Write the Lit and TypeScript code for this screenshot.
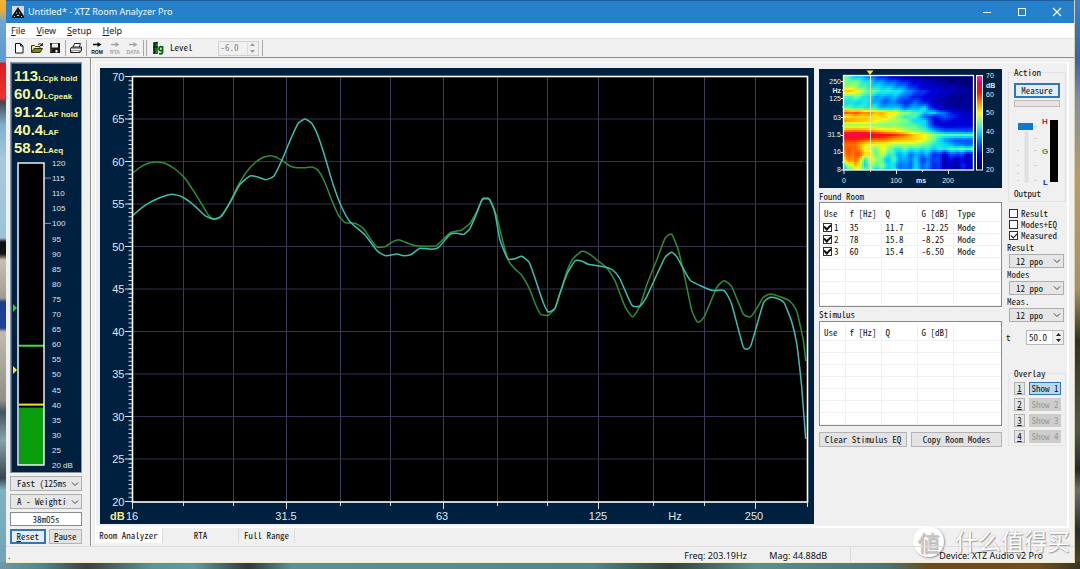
import { LitElement, html, svg, css } from "lit";
import { customElement, property } from "lit/decorators.js";

type Pt = [number, number];

/* Smooth path through a list of points. */
function smooth(p: Pt[]): string {
  let d = `M${p[0][0].toFixed(1)} ${p[0][1].toFixed(1)}`;
  for (let i = 0; i < p.length - 1; i++) {
    const a = p[Math.max(0, i - 1)], b = p[i], c = p[i + 1], e = p[Math.min(p.length - 1, i + 2)];
    const k = 12;
    d += `C${[b[0] + (c[0] - a[0]) / k, b[1] + (c[1] - a[1]) / k, c[0] - (e[0] - b[0]) / k, c[1] - (e[1] - b[1]) / k, c[0], c[1]].map((v) => v.toFixed(1)).join(" ")}`;
  }
  return d;
}

/* A run of samples: start offset, then x/y pairs in thirds of a unit. */
function run(ox: number, oy: number, v: number[]): Pt[] {
  const out: Pt[] = [];
  for (let i = 0; i < v.length; i += 2) out.push([ox + v[i] / 3, oy + v[i + 1] / 3]);
  return out;
}

const GREEN = smooth([
  ...run(25, 2, [22, 310, 45, 292, 70, 280, 95, 276, 120, 280, 150, 297, 180, 325, 205, 362, 230, 402, 250, 435, 265, 446, 285, 440, 310, 405, 340, 345, 365, 305, 390, 278, 415, 262, 437, 257, 455, 262, 475, 274, 495, 288, 515, 293, 540, 293, 562, 291, 580, 302, 600, 338, 620, 390, 640, 435]),
  ...run(240, 112, [15, 128, 45, 130, 70, 145, 95, 182, 112, 201, 135, 200, 155, 187, 175, 179, 195, 186, 220, 196, 265, 199, 290, 196, 330, 159, 365, 150, 390, 130, 410, 95, 427, 60, 450, 60, 470, 110, 485, 170, 505, 240, 525, 267, 545, 285, 570, 330, 585, 370, 602, 403, 625, 406, 645, 385]),
  ...run(460, 142, [0, 250, 20, 185, 40, 145, 65, 124, 85, 130, 115, 153, 140, 173, 165, 212, 195, 290, 218, 320, 240, 288, 260, 225, 290, 150, 315, 85, 335, 73, 355, 120, 375, 205, 395, 300, 413, 337, 433, 320, 470, 233, 492, 212, 515, 230, 550, 312, 572, 320, 592, 292, 610, 262, 632, 252, 665, 262, 690, 274, 710, 303, 730, 390, 737, 453]),
]);

const CYAN = smooth([
  ...run(25, 2, [22, 437, 60, 406, 100, 385, 140, 373, 170, 380, 205, 404, 240, 437, 268, 448, 290, 438, 315, 398, 345, 343, 375, 318, 395, 320, 422, 329, 447, 318, 470, 272, 500, 200, 520, 160, 540, 147, 560, 160, 580, 200, 600, 262, 625, 345, 650, 412]),
  ...run(240, 112, [30, 125, 75, 165, 112, 213, 137, 227, 170, 222, 190, 227, 212, 224, 240, 205, 275, 208, 295, 203, 330, 163, 350, 160, 372, 163, 390, 145, 410, 100, 427, 57, 448, 57, 465, 100, 480, 180, 503, 236, 525, 236, 545, 229, 568, 248, 590, 310, 610, 368, 625, 396, 645, 385]),
  ...run(460, 142, [0, 250, 22, 190, 45, 153, 65, 153, 85, 163, 130, 170, 158, 180, 180, 207, 215, 285, 240, 288, 260, 260, 290, 195, 315, 142, 335, 127, 350, 140, 375, 185, 393, 213, 455, 241, 492, 241, 515, 283, 550, 411, 572, 408, 610, 280, 632, 262, 650, 265, 672, 278, 695, 335, 710, 400, 725, 530, 737, 687]),
]);

/* Decay levels in dB: first number is the row position, the rest run along time. */
const DECAY: number[][] = [
  [0, 45, 40, 38, 34, 30, 27, 24, 22, 21, 21, 20, 21, 21, 20],
  [15, 45, 45, 42, 38, 36, 34, 31, 28, 26, 24, 22, 21, 21, 21],
  [33, 48, 47, 43, 41, 40, 38, 36, 30, 27, 26, 25, 24, 22, 22],
  [43, 53, 52, 46, 44, 42, 42, 39, 34, 31, 28, 27, 25, 24, 24],
  [60, 43, 45, 42, 38, 37, 38, 34, 30, 28, 26, 25, 22, 22, 22],
  [76, 41, 40, 41, 38, 34, 36, 30, 34, 30, 26, 24, 22, 23, 24],
  [94, 44, 43, 42, 42, 38, 40, 36, 38, 40, 28, 24, 23, 23, 23],
  [107, 58, 58, 56, 54, 52, 50, 46, 44, 40, 40, 34, 28, 26, 25],
  [119, 50, 52, 52, 51, 52, 48, 42, 44, 34, 30, 34, 30, 27, 26],
  [130, 56, 54, 53, 51, 49, 47, 46, 40, 40, 27, 30, 28, 27, 27],
  [146, 46, 46, 47, 46, 45, 46, 44, 44, 40, 30, 27, 27, 28, 28],
  [162, 56, 57, 56, 54, 52, 51, 48, 46, 44, 38, 34, 34, 33, 33],
  [174, 66, 67, 66, 65, 62, 60, 57, 52, 50, 46, 44, 44, 44, 44],
  [188, 60, 60, 59, 57, 57, 54, 53, 52, 50, 44, 37, 34, 34, 34],
  [202, 57, 57, 51, 50, 49, 48, 48, 48, 46, 42, 40, 36, 34, 34],
  [216, 57, 58, 50, 46, 50, 42, 44, 42, 42, 40, 42, 44, 44, 44],
  [232, 55, 59, 54, 46, 47, 40, 38, 36, 38, 32, 28, 34, 30, 28],
  [248, 52, 58, 44, 50, 40, 42, 36, 38, 33, 34, 26, 28, 26, 30],
  [266, 42, 54, 42, 46, 44, 38, 34, 38, 36, 32, 27, 24, 30, 26],
  [284, 37, 46, 48, 40, 40, 42, 34, 40, 34, 30, 27, 24, 28, 25],
];

const STOPS: [number, number[]][] = [
  [20, [0, 0, 110]], [28, [0, 0, 220]], [34, [0, 90, 255]], [40, [0, 220, 255]], [45, [110, 255, 140]],
  [50, [250, 250, 20]], [55, [255, 150, 0]], [61, [255, 20, 0]], [66, [240, 0, 90]], [70, [255, 40, 230]],
];

function tint(v: number): string {
  for (let i = 1; i < STOPS.length; i++) {
    if (v <= STOPS[i][0]) {
      const [a, ca] = STOPS[i - 1], [b, cb] = STOPS[i];
      const k = Math.max(0, (v - a) / (b - a));
      return `rgb(${ca.map((c, j) => Math.round(c + (cb[j] - c) * k)).join(",")})`;
    }
  }
  return "rgb(255,40,230)";
}

function level(x: number, y: number): number {
  const fy = y * 3;
  let r = 1;
  while (r < DECAY.length - 1 && DECAY[r][0] < fy) r++;
  const a = DECAY[r - 1], b = DECAY[r];
  const ky = Math.min(1, (fy - a[0]) / (b[0] - a[0]));
  const cx = Math.min(12.99, x / 10), c = Math.floor(cx), kx = cx - c;
  const at = (row: number[]) => row[c + 1] * (1 - kx) + row[c + 2] * kx;
  const streak = y > 66 ? 1.8 * Math.sin(x * 0.55) * Math.min(1, (y - 66) / 12) : 0;
  const ripple = y < 40 ? 0.7 * Math.sin(x * 0.5 + y * 0.4) : 0;
  return at(a) * (1 - ky) + at(b) * ky + streak + ripple;
}

const chevron = html`<svg class="chev" viewBox="0 0 8 8" aria-hidden="true"><path d="M1 2.5 4 5.5 7 2.5" fill="none" stroke="#444" /></svg>`;

@customElement("level-meter")
class LevelMeter extends LitElement {
  @property({ type: Number }) value = 39;
  static styles = css`
    :host { display: block; }
    svg { display: block; width: 100%; height: auto; }
    text { font: 8px "Liberation Sans", sans-serif; fill: #dce6ee; }
  `;
  render() {
    const y = (v: number) => 6 + (120 - v) * 3.02;
    const marks = Array.from({ length: 21 }, (_, i) => 120 - i * 5);
    return html`<svg viewBox="0 0 70 314" role="img" aria-label="Sound level meter">
      <rect x="8" y="6" width="25" height="302" fill="#000" />
      <rect x="8" y=${y(this.value)} width="25" height=${308 - y(this.value)} fill="#0a9d0e" />
      <path d="M8 ${y(59.5)}h25" stroke="#3fe23a" stroke-width="2" />
      <path d="M8 ${y(40)}h25" stroke="#f2e53a" stroke-width="2" />
      <rect x="7" y="6" width="26" height="302" fill="none" stroke="#fff" stroke-width="1.4" />
      <path d="M2 147l4 4-4 4z" fill="#22d822" /><path d="M2 209l4 4-4 4z" fill="#f5ee2a" />
      <path d="M34 ${y(115)}h6M34 ${y(100)}h6" stroke="#8a93b8" />
      ${marks.map((m) => svg`<text x="41" y=${y(m) + 3}>${m === 20 ? "20 dB" : m}</text>`)}
    </svg>`;
  }
}

@customElement("response-chart")
class ResponseChart extends LitElement {
  static styles = css`
    :host { display: block; background: #00203f; }
    svg { display: block; width: 100%; height: auto; }
    text { font: 11px "Liberation Sans", sans-serif; fill: #dfe7ee; }
    .unit { font-weight: bold; fill: #f4f08c; }
    .end { text-anchor: end; }
    .mid { text-anchor: middle; }
  `;
  render() {
    const cols = [83.5, 133.5, 186.5, 240.5, 290.5, 343.5, 397.5, 447.5, 498.5, 553.5, 604.5, 655.5];
    const rows = Array.from({ length: 11 }, (_, i) => i);
    const minor = Array.from({ length: 101 }, (_, i) => `M28.5 ${(8.5 + i * 4.25).toFixed(2)}h4`).join("");
    const names: [number, string][] = [[186, "31.5"], [342, "63"], [498, "125"], [575, "Hz"], [654, "250"]];
    return html`<svg viewBox="0 0 714 456" role="img" aria-label="Room response, dB over Hz">
      <rect x="32" y="8" width="676" height="426" fill="#000" />
      ${cols.map((x, i) => svg`<path d="M${x} 9V433" stroke="#3d3b5c" /><path d="M${x} 434v${i % 3 === 2 ? 7 : 4}" stroke="#d8dde4" />`)}
      ${rows.slice(1, 10).map((i) => svg`<path d="M33 ${8.5 + i * 42.5}H707" stroke="#34324f" />`)}
      <path d=${minor} stroke="#c9d3dc" />
      ${rows.map((i) => svg`<path d="M25 ${8.5 + i * 42.5}h8" stroke="#dfe7ee" /><text class="end" x="24.5" y=${12.5 + i * 42.5}>${70 - i * 5}</text>`)}
      <path d="M32.5 434v7M707.5 434v5" stroke="#d8dde4" />
      <path d=${GREEN} fill="none" stroke="#2d8f33" stroke-width="1.5" />
      <path d=${CYAN} fill="none" stroke="#3dbfb0" stroke-width="1.5" />
      <rect x="32.5" y="8.5" width="675" height="425.5" fill="none" stroke="#fff" stroke-width="1.6" />
      <text class="unit" x="10" y="452">dB</text><text x="26" y="452">16</text>
      ${names.map(([x, t]) => svg`<text class="mid" x=${x} y="452">${t}</text>`)}
    </svg>`;
  }
}

@customElement("decay-map")
class DecayMap extends LitElement {
  static styles = css`
    :host { display: block; background: #00203f; }
    svg { display: block; width: 100%; height: auto; }
    text { font: 7px "Liberation Sans", sans-serif; fill: #e6ecf2; }
    .b { font-weight: bold; }
    .end { text-anchor: end; }
    .mid { text-anchor: middle; }
  `;
  render() {
    const cells = [];
    for (let y = 0; y < 94; y += 2) for (let x = 0; x < 130; x += 2) cells.push(svg`<rect x=${25 + x} y=${7 + y} width="2" height="2" fill=${tint(level(x, y))} />`);
    const left: [number, string][] = [[15, "250"], [32, "125"], [51, "63"], [68, "31.5"], [85, "16"], [103, "8"]];
    const right: [number, string][] = [[9, "70"], [28, "60"], [46, "50"], [65, "40"], [84, "30"], [103, "20"]];
    return html`<svg viewBox="0 0 183 119" role="img" aria-label="Decay over time">
      <defs><linearGradient id="scale" x1="0" y1="0" x2="0" y2="1">
        ${[...STOPS].reverse().map(([v, c]) => svg`<stop offset=${(70 - v) / 50} stop-color="rgb(${c.join(",")})" />`)}
      </linearGradient></defs>
      <g shape-rendering="crispEdges">${cells}</g>
      <path d="M51.5 6v95" stroke="#f3f3a8" />
      <path d="M47.500 1.500h7l-3.500 4.500z" fill="#f6ea20" />
      <rect x="24.500" y="6.500" width="130" height="94.500" fill="none" stroke="#fff" stroke-width="1.300" />
      <rect x="157.500" y="6.500" width="6" height="94.500" fill="url(#scale)" stroke="#fff" />
      <path d="M22 12.500h3M22 29.500h3M22 48.500h3M22 66.500h3M22 83.500h3M22 101h3M23 21h2M23 38h2M23 57h2M23 75h2M23 93h2M25 101v4M77.500 101v4M129.500 101v4M51.500 101v2M103.500 101v2" stroke="#dfe6ee" />
      ${left.map(([y, t]) => svg`<text class="end" x="22" y=${y}>${t}</text>`)}
      <text class="end b" x="22" y="24">Hz</text>
      ${right.map(([y, t]) => svg`<text x="167" y=${y}>${t}</text>`)}
      <text class="b" x="167" y="19">dB</text>
      <text class="mid" x="25" y="114">0</text><text class="mid" x="77" y="114">100</text>
      <text class="mid b" x="102" y="114">ms</text><text class="mid" x="129" y="114">200</text>
    </svg>`;
  }
}

@customElement("app-root")
class AppRoot extends LitElement {
  static styles = css`
    :host {
      display: block;
      min-height: 100vh;
      --ui: "Noto Sans", "Open Sans", sans-serif;
      --fixed: "Noto Sans CJK SC", monospace;
      font: 9px/12px var(--fixed);
      font-feature-settings: "hwid";
      color: #111;
    }
    * { box-sizing: border-box; }
    button, input, select { font: inherit; color: inherit; margin: 0; padding: 0; border-radius: 0; }
    u { text-underline-offset: 1px; }
    .desktop {
      position: relative;
      display: flex;
      min-height: 100vh;
      padding: 0 5px 6px 6px;
      background:
        linear-gradient(90deg, #6f97a4, #4d8490 4%, #3e3f40 8%, #57949b 14%, #5e9aa8 18%, #2f393a 23%, #5b9199 27%, #4f8690 55%, #33423f 62%, #5b8e95 70%, #49747c 82%, #6b4a1e 86%, #70501f 96%, #3a3424) bottom / 100% 7px no-repeat,
        linear-gradient(180deg, #f2b233 0, #f0a92c 10px, #6ea6d4 22px, #5f9bcf 62px, #d81e1e 63px, #e33 98px, #3f4850 102px, #7fb0cf 125px, #a6c8dc 160px, #9cc4d8 238px, #101010 242px, #111 254px, #c9c0b0 260px, #a39c90 298px, #1b3d8c 302px, #1f429a 328px, #c4bbad 332px, #8f9088 400px, #47535a 412px, #83a5ae 440px, #3b464c 478px, #7fb2c0 490px, #6fa4b4 100%) left / 6px 100% no-repeat,
        linear-gradient(180deg, #3c7fc4 0, #3566a8 60px, #7e8ea6 100px, #b89a6c 180px, #a48f6e 290px, #2e3325 340px, #4a5a4a 430px, #222a2a 470px, #6a6f66 490px, #24302e 530px, #5c4520 100%);
    }
    .window { flex: 1; min-width: 0; display: flex; flex-direction: column; background: #f0f0f0; border-bottom: 1px solid #f3ecc4; border-right: 1px solid #d9cfa6; }
    .title { display: flex; align-items: center; height: 23px; background: #2681cd; border-top: 1px solid #1c5f9c; color: #f4f9ff; font: 9px/14px var(--ui); padding-left: 6px; gap: 4px; }
    .title h1 { font: inherit; margin: 0; flex: 1; }
    .title svg, .tools svg { display: block; flex: none; }
    .title button { width: 35px; height: 22px; border: 0; background: none; display: grid; place-items: center; }
    .title .app { width: 12px; height: 12px; }
    .caps { display: flex; }
    .menu { display: flex; gap: 11px; height: 15px; padding-left: 5px; background: #fff; font: 9px/15px var(--ui); }
    .menu a { color: #222; text-decoration: none; }
    .tools { display: flex; align-items: center; height: 20px; padding-left: 4px; border-top: 1px solid #e2e2e2; border-bottom: 1px solid #8c8c8c; background: #f1f1f1; }
    .tools button { border: 0; background: none; width: 18px; height: 18px; display: grid; place-items: center; }
    .tools .fg { margin-left: 4px; }
    .sep { width: 1px; height: 16px; margin: 0 1px; background: #a8a8a8; }
    .tools label { margin-left: 5px; margin-right: 25px; }
    .tools .off + .sep { margin-left: 3px; }
    .tiny { font: bold 5px "Liberation Sans", sans-serif; text-anchor: middle; }
    .spin { display: flex; height: 15px; border: 1px solid #b8b8b8; background: #fff; }
    .spin input { width: 26px; min-width: 0; flex: 1; border: 0; background: none; padding-left: 2px; }
    .spin .arrows { display: grid; width: 11px; background: #f0f0f0; border-left: 1px solid #ddd; }
    .spin .arrows button { width: 10px; height: 6px; border: 0; background: none; display: grid; place-items: center; }
    .spin.off { width: 41px; background: #f0f0f0; border-color: #d0d0d0; color: #888; }
    .main { flex: 1; display: flex; min-height: 0; }
    .side { flex: none; width: 85px; padding: 4px 8px 2px 4px; display: flex; flex-direction: column; gap: 3px; border-right: 1px solid #8d8d8d; }
    .frame { background: #00203f; border: 1px solid #8a93a0; box-shadow: inset 1px 1px #555e6c; height: 411px; }
    .reads { margin: 0; padding: 4px 0 0 3px; }
    .reads div { display: flex; align-items: baseline; height: 18px; color: #f6f79a; white-space: nowrap; font: bold 15px/18px "Liberation Sans", sans-serif; font-feature-settings: normal; }
    .reads dd { margin: 0; order: 0; }
    .reads dt { order: 1; font-size: 8px; }
    .pick { position: relative; display: flex; height: 15px; border: 1px solid #adadad; background: #e6e6e6; }
    .pick select { flex: 1; min-width: 0; width: 100%; appearance: none; border: 0; background: none; padding-left: 6px; padding-right: 14px; }
    .chev { position: absolute; right: 2px; top: 3px; width: 8px; height: 8px; pointer-events: none; }
    .time { width: 100%; height: 14px; border: 1px solid #8a8a8a; background: #fff; text-align: center; }
    .pair { display: flex; gap: 3px; }
    .btn { border: 1px solid #b3b3b3; background: #e3e3e3; height: 15px; line-height: 11px; white-space: nowrap; }
    .pair .btn { flex: 1; }
    .btn.focus { border: 2px solid #2f78b4; background: #e6eef5; line-height: 10px; }
    .content { flex: 1; min-width: 0; display: flex; flex-direction: column; padding: 4px 5px 0 3px; border-left: 1px solid #fff; }
    .page { display: flex; padding: 5px 0 2px 4px; background: #f0f0f0; border: solid #fff; border-width: 1px 2px 2px 1px; }
    .page response-chart { flex: 1; min-width: 0; }
    .mid { flex: none; width: 183px; margin-left: 5px; padding-top: 1px; }
    .mid h2, .act h2 { font: inherit; margin: 0; height: 14px; line-height: 17px; }
    .list { height: 105px; border: 1px solid #8a8a8a; background: #fff; padding: 3px 0 0; overflow: hidden; }
    .mid .list + h2 { height: 14px; line-height: 15px; }
    table { width: 100%; border-collapse: collapse; table-layout: fixed; }
    th, td { height: 12px; padding: 0 0 0 4px; font-weight: normal; text-align: left; line-height: 11px; border: solid #f0f0f0; border-width: 0 1px 1px 0; white-space: nowrap; }
    thead th { height: 15px; }
    tr > :last-child { border-right: 0; }
    .use { display: flex; align-items: center; gap: 2px; }
    .c1 { width: 25px; } .c2, .c3, .c4 { width: 36px; }
    input[type="checkbox"] { appearance: none; flex: none; width: 9px; height: 9px; border: 1px solid #333; background: #fff; display: grid; place-items: center; }
    input[type="checkbox"]:checked::after { content: ""; width: 5px; height: 3px; border: solid #111; border-width: 0 0 1px 1px; rotate: -45deg; translate: 0 -1px; }
    .use input:checked::after { border-width: 0 0 2px 2px; }
    td:first-child { padding-left: 3px; }
    .two { display: grid; grid-template-columns: 88px 1fr; gap: 4px; margin-top: 6px; }
    .act { flex: none; width: 65px; padding-left: 5px; display: flex; flex-direction: column; }
    .box { width: 58px; border: 1px solid #e2e2e2; padding: 0 5px; margin-top: 4px; height: 130px; margin-left: 1px; }
    .box .btn { width: 100%; display: block; margin-top: 1px; }
    .box h2 { margin-top: -6px; line-height: 12px; height: 15px; }
    .bar { height: 7px; margin: 2px 0 0; border: 1px solid #c4bcbc; background: #e9e4e4; }
    .gain { height: 72px; margin-top: 9px; }
    .gain svg { display: block; width: 46px; height: 72px; }
    .gain text { font: bold 8px "Liberation Sans", sans-serif; }
    .fader { position: relative; display: block; }
    .fader input { position: absolute; inset: 0; width: 20px; height: 66px; opacity: 0; }
    .out { height: 12px; line-height: 12px; }
    .checks { margin-top: 6px; padding-left: 2px; display: grid; }
    .checks label { display: flex; align-items: center; gap: 3px; height: 11px; line-height: 11px; }
    .ppo { display: block; }
    .ppo span { display: block; height: 13px; line-height: 13px; }
    .ppo .pick { width: 55px; height: 14px; margin-left: 2px; }
    .ppo .chev { top: 2px; }
    .cap { display: flex; align-items: center; justify-content: space-between; width: 58px; margin-top: 8px; margin-left: -1px; }
    .cap .spin { width: 38px; }
    .over { width: 58px; margin-top: 28px; margin-left: 1px; border: 1px solid #e6e6e6; padding: 0 4px 2px 5px; display: grid; grid-template-columns: 11px 1fr; gap: 3px 4px; }
    .over h2 { grid-column: 1 / 3; margin-top: -7px; height: 12px; line-height: 13px; }
    .over .btn { height: 13px; line-height: 10px; }
    .over .on { border: 1px solid #2f78b4; background: #b9d8f0; }
    .over .btn:disabled { background: #cdcdcd; border-color: #cdcdcd; color: #989898; }
    .tabs { display: flex; height: 16px; }
    .tabs button { border: 0; border-right: 1px solid #ddd; background: none; height: 15px; line-height: 13px; padding: 0; width: 76px; }
    .tabs .on { background: #fff; width: 68px; line-height: 15px; }
    .tabs .wide { width: 56px; }
    .status { position: relative; z-index: 1; display: flex; height: 16px; border-top: 1px solid #dcdcdc; font: 9px/17px var(--ui); padding-right: 31px; }
    .status span { padding-left: 4px; border-left: 1px solid #dcdcdc; }
    .status .dot { flex: 1; border: 0; padding-left: 2px; }
    .status .f { width: 85px; border: 0; } .status .m { width: 85px; border: 0; }
    .status .d { padding-left: 88px; }
    .mark { position: absolute; right: 10px; bottom: 12px; display: flex; align-items: center; gap: 11px; color: #fff; font: 23px/24px "Noto Sans CJK SC", sans-serif; text-shadow: 1px 1px 1px #9a9a9a, 0 0 2px #b5b5b5; pointer-events: none; }
    .mark span { padding-bottom: 3px; }
    .mark b { width: 31px; height: 31px; border-radius: 50%; background: #fff; box-shadow: 1px 1px 2px #999; color: #c9c9c9; font: 22px/30px "Noto Sans CJK SC", sans-serif; text-align: center; text-shadow: 1px 1px 1px #aaa; }
  `;

  private spin(value: string, label: string, off = false) {
    const c = off ? "#999" : "#222";
    return html`<span class="spin ${off ? "off" : ""}"><input type="text" aria-label=${label} .value=${value} ?disabled=${off} />
      <span class="arrows"><button aria-label="Up"><svg width="5" height="3"><path d="M0 3 2.500 0 5 3z" fill=${c} /></svg></button><button aria-label="Down"><svg width="5" height="3"><path d="M0 0 2.500 3 5 0z" fill=${c} /></svg></button></span></span>`;
  }

  private ppo(name: string) {
    return html`<label class="ppo"><span>${name}</span><span class="pick"><select><option>12 ppo</option></select>${chevron}</span></label>`;
  }

  private table(rows: string[][], last: string) {
    const all = [...rows, ...Array.from({ length: 7 - rows.length }, () => ["", "", "", "", ""])];
    return html`<div class="list"><table>
      <colgroup><col class="c1" /><col class="c2" /><col class="c3" /><col class="c4" /><col /></colgroup>
      <thead><tr><th>Use</th><th>f [Hz]</th><th>Q</th><th>G [dB]</th><th>${last}</th></tr></thead>
      <tbody>${all.map((r) => html`<tr>${r.map((c, i) => html`<td>${i === 0 && c ? html`<label class="use"><input type="checkbox" checked />${c}</label>` : c}</td>`)}</tr>`)}</tbody>
    </table></div>`;
  }

  private arrow(name: string, c: string) {
    return html`<button aria-label=${name}><svg width="16" height="14" viewBox="0 0 16 14"><path d="M4 3.500h5" stroke=${c} stroke-width="1.500" /><path d="M8.500 1l4 2.500-4 2.500z" fill=${c} /><text class="tiny" x="8" y="12.500" fill=${c}>${name}</text></svg></button>`;
  }

  render() {
    return html`<div class="desktop">
      <div class="window">
        <header class="title">
          <svg class="app" viewBox="0 0 12 12"><rect width="12" height="12" fill="#d5d9dc" /><path d="M6 1 12 10v2H0v-2z" fill="#151515" /><path d="M2 10.500h1M5 9.500h2M9 10.500h1M4 7h1M7 7h1" stroke="#ddd" /></svg>
          <h1>Untitled* - XTZ Room Analyzer Pro</h1>
          <div class="caps">
            <button aria-label="Minimize"><svg width="10" height="10"><path d="M1 5.500h8" stroke="#fff" /></svg></button>
            <button aria-label="Maximize"><svg width="10" height="10"><rect x="1.500" y="1.500" width="7" height="7" fill="none" stroke="#fff" /></svg></button>
            <button aria-label="Close"><svg width="10" height="10"><path d="M1 1l8 8M9 1 1 9" stroke="#fff" stroke-width="1.200" /></svg></button>
          </div>
        </header>
        <nav class="menu"><a href="#file"><u>F</u>ile</a><a href="#view"><u>V</u>iew</a><a href="#setup"><u>S</u>etup</a><a href="#help"><u>H</u>elp</a></nav>
        <div class="tools">
          <button aria-label="New"><svg width="12" height="12"><path d="M2.500 1.500h5l2.500 2.500v7h-7.500zM7.500 1.500v2.500h2.500" fill="#fff" stroke="#111" /></svg></button>
          <button aria-label="Open"><svg width="14" height="12"><path d="M1.500 10V3.500h3l1 1h4.500v2" fill="#f1ee8e" stroke="#33330a" /><path d="M1.500 10.500 4 6.500h8.500l-2.500 4z" fill="#85801a" stroke="#33330a" /><path d="M8 2.500q2-1.500 4 0M12.500 1v2.500h-2.500" fill="none" stroke="#222" /></svg></button>
          <button aria-label="Save"><svg width="12" height="12"><rect x="1" y="1" width="10" height="10" fill="#1a1a12" /><rect x="3" y="1.500" width="6" height="4" fill="#f0f0f0" /><path d="M2 3v7" stroke="#6f6c1c" /><rect x="6.500" y="8" width="2" height="2.500" fill="#eee" /></svg></button>
          <i class="sep"></i>
          <button aria-label="Print"><svg width="14" height="12"><path d="M4 5.500 5.500 1.500h6l-1.500 4" fill="#fff" stroke="#222" /><path d="M1.500 6.500 3 5h9.500v3.500L11 10.500H1.500z" fill="#999" stroke="#222" /><path d="M2 7.500h9.500M3.500 9.500h6" stroke="#eee" /></svg></button>
          <i class="sep"></i>
          ${this.arrow("ROM", "#111")}${this.arrow("RTA", "#a4a4a4")}${this.arrow("DATA", "#a4a4a4")}
          <i class="sep"></i><i class="sep"></i>
          <svg class="fg" width="13" height="14" viewBox="0 0 13 14"><path d="M1 1h5v12h-5z" fill="#118a1e" /><path d="M2.500 13V4q0-2.500 3-2.500M1 6h4.500" fill="none" stroke="#072b0a" stroke-width="1.500" /><path d="M10.500 5v6.500q0 1.500-3.500 1.200M10.500 6q-3.500-1-3.500 1.700t3.500 1.800" fill="none" stroke="#0c5f16" stroke-width="1.800" /></svg>
          <label>Level</label>${this.spin("-6.0", "Level", true)}<i class="sep"></i>
        </div>
        <div class="main">
          <aside class="side">
            <div class="frame">
              <dl class="reads">${[["LCpk hold", "113"], ["LCpeak", "60.0"], ["LAF hold", "91.2"], ["LAF", "40.4"], ["LAeq", "58.2"]].map(([k, v]) => html`<div><dt>${k}</dt><dd>${v}</dd></div>`)}</dl>
              <level-meter></level-meter>
            </div>
            <span class="pick"><select aria-label="Time constant"><option>Fast (125ms)</option></select>${chevron}</span>
            <span class="pick"><select aria-label="Weighting"><option>A - Weighting</option></select>${chevron}</span>
            <input class="time" type="text" aria-label="Elapsed" value="38m05s" readonly />
            <div class="pair"><button class="btn focus"><u>R</u>eset</button><button class="btn"><u>P</u>ause</button></div>
          </aside>
          <div class="content">
            <main class="page">
              <response-chart></response-chart>
              <section class="mid">
                <decay-map></decay-map>
                <h2>Found Room</h2>
                ${this.table([["1", "35", "11.7", "-12.25", "Mode"], ["2", "78", "15.8", "-8.25", "Mode"], ["3", "60", "15.4", "-6.50", "Mode"]], "Type")}
                <h2>Stimulus</h2>
                ${this.table([], "")}
                <div class="two"><button class="btn">Clear Stimulus EQ</button><button class="btn">Copy Room Modes</button></div>
              </section>
              <section class="act">
                <div class="box">
                  <h2>Action</h2>
                  <button class="btn focus">Measure</button>
                  <div class="bar"></div>
                  <div class="gain"><label class="fader"><input type="range" aria-label="Output" />
                    <svg viewBox="0 0 46 72">
                      <rect x="11" y="16" width="3" height="50" fill="#e3e3e3" stroke="#cfcfcf" stroke-width=".5" />
                      <path d="M3 34.500h2M3 49.500h2M3 57.500h2M3 64.500h2M20 10.500h3M20 22.500h3M20 34.500h3M20 49.500h3M20 64.500h3" stroke="#cfcfcf" />
                      <rect x="4" y="7" width="15" height="7" fill="#0f78d4" />
                      <text x="28" y="8" fill="#d01818">H</text><text x="28" y="38" fill="#18a018">G</text><text x="29" y="69" fill="#1a1ac0">L</text>
                      <rect x="36" y="4" width="8" height="62" fill="#000" />
                    </svg></label></div>
                  <div class="out">Output</div>
                </div>
                <div class="checks">
                  <label><input type="checkbox" />Result</label><label><input type="checkbox" />Modes+EQ</label><label><input type="checkbox" checked />Measured</label>
                </div>
                ${this.ppo("Result")}${this.ppo("Modes")}${this.ppo("Meas.")}
                <div class="cap"><span>t</span>${this.spin("50.0", "t")}</div>
                <div class="over"><h2>Overlay</h2>
                  ${[1, 2, 3, 4].map((n) => html`<button class="btn"><u>${n}</u></button><button class="btn ${n === 1 ? "on" : ""}" ?disabled=${n > 1}>Show ${n}</button>`)}
                </div>
              </section>
            </main>
            <div class="tabs"><button class="on">Room Analyzer</button><button>RTA</button><button class="wide">Full Range</button></div>
          </div>
        </div>
        <footer class="status"><span class="dot">.</span><span class="f">Freq: 203.19Hz</span><span class="m">Mag: 44.88dB</span><span class="d">Device: XTZ Audio v2 Pro</span></footer>
      </div>
      <div class="mark"><b>値</b><span>什么值得买</span></div>
    </div>`;
  }
}
